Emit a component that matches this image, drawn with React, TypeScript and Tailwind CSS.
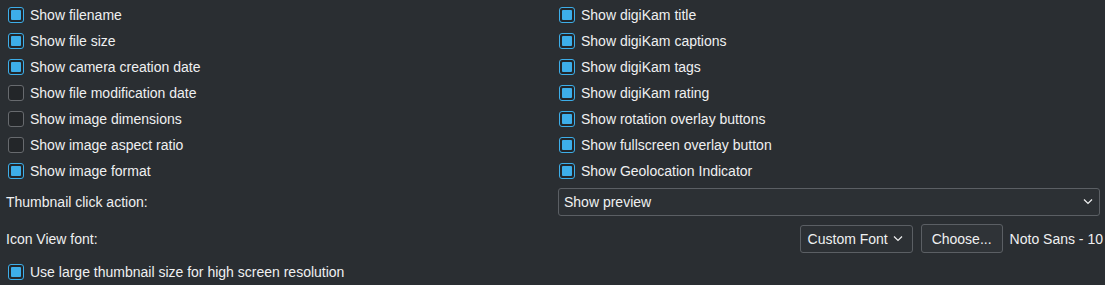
import React from 'react';

const leftItems: [string, boolean][] = [
  ['Show filename', true],
  ['Show file size', true],
  ['Show camera creation date', true],
  ['Show file modification date', false],
  ['Show image dimensions', false],
  ['Show image aspect ratio', false],
  ['Show image format', true],
];

const rightItems: [string, boolean][] = [
  ['Show digiKam title', true],
  ['Show digiKam captions', true],
  ['Show digiKam tags', true],
  ['Show digiKam rating', true],
  ['Show rotation overlay buttons', true],
  ['Show fullscreen overlay button', true],
  ['Show Geolocation Indicator', true],
];

const Chevron = () => (
  <svg width="10" height="6" viewBox="0 0 10 6" fill="none">
    <path d="M1 0.5 L5 4.5 L9 0.5" stroke="#eff0f1" strokeWidth="1.2" />
  </svg>
);

const CheckBox = ({ label, checked }: { label: string; checked: boolean }) => (
  <div className="flex items-center h-[26px]">
    <div
      className={`ml-[2px] w-[16px] h-[16px] rounded-[3px] border flex items-center justify-center bg-[#232629] ${
        checked ? 'border-[#3daee9]' : 'border-[#676a6e]'
      }`}
    >
      {checked && <div className="w-[10px] h-[10px] rounded-[1px] bg-[#3daee9]" />}
    </div>
    <span className="ml-[6px]">{label}</span>
  </div>
);

export default function App() {
  return (
    <div
      className="w-[1105px] h-[285px] bg-[#2a2e32] text-[#eff0f1] text-[14px] leading-none pl-[6px] pr-[5px] pt-[2px] overflow-hidden"
      style={{ fontFamily: '"Liberation Sans", Arial, sans-serif' }}
    >
      <div className="grid grid-cols-2 gap-x-[8px]">
        <div className="flex flex-col">
          {leftItems.map(([l, c]) => (
            <CheckBox key={l} label={l} checked={c} />
          ))}
        </div>
        <div className="flex flex-col">
          {rightItems.map(([l, c]) => (
            <CheckBox key={l} label={l} checked={c} />
          ))}
        </div>
      </div>

      <div className="grid grid-cols-2 gap-x-[8px] mt-[4px] h-[28px] items-center">
        <span>Thumbnail click action:</span>
        <div className="ml-[1px] h-[28px] rounded-[3px] border border-[#5b5f64] bg-[#2c3034] flex items-center justify-between pl-[5px] pr-[6px]">
          <span>Show preview</span>
          <Chevron />
        </div>
      </div>

      <div className="flex items-center mt-[8px] h-[29px] -mr-[3px]">
        <span className="flex-1">Icon View font:</span>
        <div className="w-[113px] h-[28px] rounded-[3px] border border-[#5b5f64] bg-[#2c3034] flex items-center justify-between pl-[7px] pr-[9px]">
          <span>Custom Font</span>
          <Chevron />
        </div>
        <div className="ml-[8px] w-[82px] h-[29px] rounded-[3px] border border-[#5b5f64] bg-[#2f3337] flex items-center justify-center">
          Choose...
        </div>
        <span className="ml-[7px]">Noto Sans - 10</span>
      </div>

      <div className="mt-[6px]">
        <CheckBox label="Use large thumbnail size for high screen resolution" checked />
      </div>
    </div>
  );
}
